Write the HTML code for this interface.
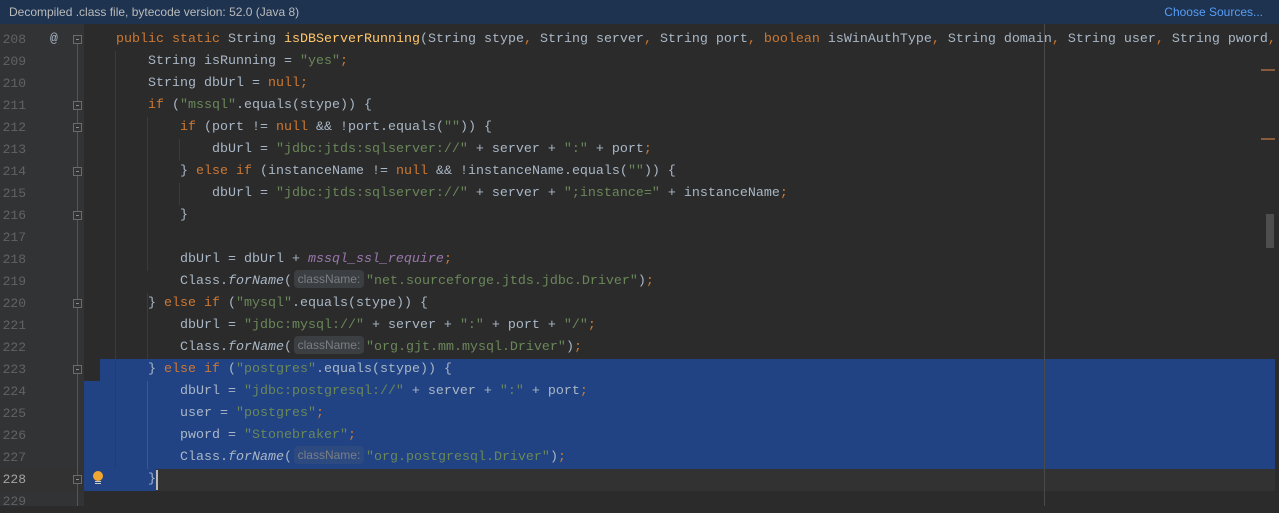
<!DOCTYPE html><html><head><style>
body{margin:0;width:1279px;height:506px;overflow:hidden;background:#2b2b2b;position:relative;font-family:"Liberation Mono",monospace;font-size:13.33px}
.hdr{position:absolute;left:0;top:0;width:1279px;height:24px;background:#1d3350;font-family:"Liberation Sans",sans-serif;font-size:12px;color:#bbbbbb}
.gut{position:absolute;left:0;top:24px;width:84px;height:482px;background:#313335}
.r{position:absolute;left:0;height:22px;line-height:22px;white-space:pre;color:#a9b7c6}
.n{position:absolute;width:26px;text-align:right;left:0;color:#606366;font-size:13px}
.c{position:absolute;left:84px}
.k{color:#cc7832}.s{color:#6a8759}.f{color:#ffc66d}.i{font-style:italic}.p{color:#9876aa;font-style:italic}
.h{display:inline-block;width:70px;height:18px;line-height:18px;margin:0 2px 0 2px;vertical-align:middle;background:#3b3f41;border-radius:4px;color:#7a7e85;font-family:"Liberation Sans",sans-serif;font-size:12px;text-align:center;position:relative;top:-1px}
.sel .h{background:#2c4a80}
.g{position:absolute;width:1px;background:#3b3b3b}
.fm{position:absolute;left:73px;width:9px;height:9px;border:1px solid #6b6b6b;box-sizing:border-box;background:#313335}
.fm:after{content:"";position:absolute;left:2px;top:3px;width:3px;height:1px;background:#8a8a8a}
</style></head><body>
<div class="hdr"><span style="position:absolute;left:9px;top:5px">Decompiled .class file, bytecode version: 52.0 (Java 8)</span><span style="position:absolute;right:16px;top:5px;color:#589df6">Choose Sources...</span></div>
<div class="gut"></div>
<div style="position:absolute;left:0;top:469px;width:1279px;height:22px;background:#323232"></div>
<div style="position:absolute;left:100px;top:359px;width:1175px;height:22px;background:#214283"></div>
<div style="position:absolute;left:84px;top:381px;width:1191px;height:88px;background:#214283"></div>
<div style="position:absolute;left:84px;top:469px;width:72px;height:22px;background:#214283"></div>
<div style="position:absolute;left:77px;top:36px;width:1px;height:470px;background:#555"></div>
<div class="g" style="left:115px;top:51px;height:418px"></div>
<div class="g" style="left:147px;top:117px;height:154px"></div>
<div class="g" style="left:147px;top:293px;height:66px"></div>
<div class="g" style="left:147px;top:381px;height:88px;background:#3a5a96"></div>
<div class="g" style="left:179px;top:139px;height:22px"></div>
<div class="g" style="left:179px;top:183px;height:22px"></div>
<div class="g" style="left:1044px;top:24px;height:482px;background:#4a4a4a"></div>
<div class="fm" style="top:35px"></div><div class="fm" style="top:101px"></div><div class="fm" style="top:123px"></div>
<div class="fm" style="top:167px"></div><div class="fm" style="top:211px"></div><div class="fm" style="top:299px"></div>
<div class="fm" style="top:365px"></div><div class="fm" style="top:475px"></div>
<div style="position:absolute;left:50px;top:31px;color:#a9b7c6;font-size:13px">@</div>
<div style="position:absolute;left:93px;top:471px;width:10px;height:10px;border-radius:50%;background:#f0a732"></div>
<div style="position:absolute;left:95px;top:481px;width:6px;height:1px;background:#ccc"></div>
<div style="position:absolute;left:95px;top:483px;width:6px;height:1px;background:#ccc"></div>
<div style="position:absolute;left:156px;top:470px;width:2px;height:20px;background:#bbbbbb"></div>
<div style="position:absolute;left:1261px;top:69px;width:14px;height:2px;background:#8a5a3c"></div>
<div style="position:absolute;left:1261px;top:138px;width:14px;height:2px;background:#8a5a3c"></div>
<div style="position:absolute;left:1266px;top:214px;width:8px;height:34px;background:#4e4e4e"></div>
<div style="position:absolute;left:1275px;top:24px;width:4px;height:482px;background:#2b2b2b"></div>

<div class="r" style="top:29px"><span class="n">208</span><span class="c">    <span class="k">public static </span>String <span class="f">isDBServerRunning</span>(String stype<span class="k">, </span>String server<span class="k">, </span>String port<span class="k">, boolean </span>isWinAuthType<span class="k">, </span>String domain<span class="k">, </span>String user<span class="k">, </span>String pword<span class="k">,</span></span></div>
<div class="r" style="top:51px"><span class="n">209</span><span class="c">        String isRunning = <span class="s">"yes"</span><span class="k">;</span></span></div>
<div class="r" style="top:73px"><span class="n">210</span><span class="c">        String dbUrl = <span class="k">null;</span></span></div>
<div class="r" style="top:95px"><span class="n">211</span><span class="c">        <span class="k">if </span>(<span class="s">"mssql"</span>.equals(stype)) {</span></div>
<div class="r" style="top:117px"><span class="n">212</span><span class="c">            <span class="k">if </span>(port != <span class="k">null </span>&amp;&amp; !port.equals(<span class="s">""</span>)) {</span></div>
<div class="r" style="top:139px"><span class="n">213</span><span class="c">                dbUrl = <span class="s">"jdbc:jtds:sqlserver://"</span> + server + <span class="s">":"</span> + port<span class="k">;</span></span></div>
<div class="r" style="top:161px"><span class="n">214</span><span class="c">            } <span class="k">else if </span>(instanceName != <span class="k">null </span>&amp;&amp; !instanceName.equals(<span class="s">""</span>)) {</span></div>
<div class="r" style="top:183px"><span class="n">215</span><span class="c">                dbUrl = <span class="s">"jdbc:jtds:sqlserver://"</span> + server + <span class="s">";instance="</span> + instanceName<span class="k">;</span></span></div>
<div class="r" style="top:205px"><span class="n">216</span><span class="c">            }</span></div>
<div class="r" style="top:227px"><span class="n">217</span></div>
<div class="r" style="top:249px"><span class="n">218</span><span class="c">            dbUrl = dbUrl + <span class="p">mssql_ssl_require</span><span class="k">;</span></span></div>
<div class="r" style="top:271px"><span class="n">219</span><span class="c">            Class.<span class="i">forName</span>(<span class="h">className:</span><span class="s">"net.sourceforge.jtds.jdbc.Driver"</span>)<span class="k">;</span></span></div>
<div class="r" style="top:293px"><span class="n">220</span><span class="c">        } <span class="k">else if </span>(<span class="s">"mysql"</span>.equals(stype)) {</span></div>
<div class="r" style="top:315px"><span class="n">221</span><span class="c">            dbUrl = <span class="s">"jdbc:mysql://"</span> + server + <span class="s">":"</span> + port + <span class="s">"/"</span><span class="k">;</span></span></div>
<div class="r" style="top:337px"><span class="n">222</span><span class="c">            Class.<span class="i">forName</span>(<span class="h">className:</span><span class="s">"org.gjt.mm.mysql.Driver"</span>)<span class="k">;</span></span></div>
<div class="r sel" style="top:359px"><span class="n">223</span><span class="c">        } <span class="k">else if </span>(<span class="s">"postgres"</span>.equals(stype)) {</span></div>
<div class="r sel" style="top:381px"><span class="n">224</span><span class="c">            dbUrl = <span class="s">"jdbc:postgresql://"</span> + server + <span class="s">":"</span> + port<span class="k">;</span></span></div>
<div class="r sel" style="top:403px"><span class="n">225</span><span class="c">            user = <span class="s">"postgres"</span><span class="k">;</span></span></div>
<div class="r sel" style="top:425px"><span class="n">226</span><span class="c">            pword = <span class="s">"Stonebraker"</span><span class="k">;</span></span></div>
<div class="r sel" style="top:447px"><span class="n">227</span><span class="c">            Class.<span class="i">forName</span>(<span class="h">className:</span><span class="s">"org.postgresql.Driver"</span>)<span class="k">;</span></span></div>
<div class="r sel" style="top:469px"><span class="n" style="color:#a4a3a3">228</span><span class="c">        }</span></div>
<div class="r" style="top:491px"><span class="n">229</span></div>
</body></html>
